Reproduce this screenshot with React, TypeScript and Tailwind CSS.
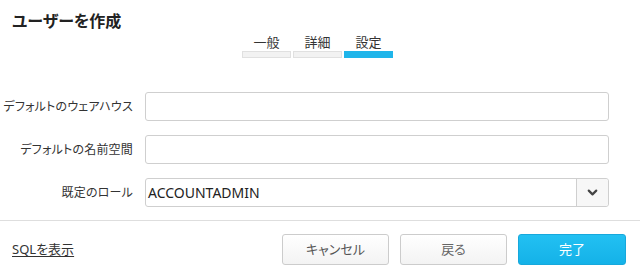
import { ChevronDown } from 'lucide-react'

const font = { fontFamily: '"Noto Sans", "Noto Sans CJK JP", sans-serif' }

const steps = [
  { label: '一般', active: false },
  { label: '詳細', active: false },
  { label: '設定', active: true },
]

function Field({ label, children }: { label: string; children: React.ReactNode }) {
  return (
    <div className="flex items-center h-[29px]">
      <div className="w-[133px] text-right text-[12px] tracking-[0.2px] text-[#333] whitespace-nowrap">
        {label}
      </div>
      <div className="ml-[12px] w-[464px] h-[29px]">{children}</div>
    </div>
  )
}

export default function App() {
  return (
    <div
      className="w-[640px] h-[280px] bg-white flex flex-col [font-family:'Noto_Sans','Noto_Sans_CJK_JP',sans-serif] [font-feature-settings:'palt']"
    >
      <h1 className="pt-[8px] px-[12px] text-[16px] font-bold leading-[26px] text-[#222]">
        ユーザーを作成
      </h1>

      {/* Step indicator */}
      <div className="flex ml-[242px] gap-[2px]">
        {steps.map((s) => (
          <div key={s.label} className="w-[49px] flex flex-col items-center">
            <span className="text-[13px] leading-[17px] text-[#333]">{s.label}</span>
            <div
              className={
                s.active
                  ? 'w-full h-[7px] bg-[#1fb5ea]'
                  : 'w-full h-[7px] bg-[#f2f2f2] border border-[#e0e0e0]'
              }
            />
          </div>
        ))}
      </div>

      <div className="mt-[34px] flex flex-col gap-[14px]">
        <Field label="デフォルトのウェアハウス">
          <div className="h-full border border-[#cfcfcf] rounded-[3px]" />
        </Field>
        <Field label="デフォルトの名前空間">
          <div className="h-full border border-[#cfcfcf] rounded-[3px]" />
        </Field>
        <Field label="既定のロール">
          <div className="h-full border border-[#cfcfcf] rounded-[3px] flex items-center">
            <span className="flex-1 pl-[2px] text-[14px] text-[#222]" style={font}>
              ACCOUNTADMIN
            </span>
            <div className="w-[32px] h-full border-l border-[#cfcfcf] bg-[#f7f7f7] rounded-r-[3px] flex items-center justify-center">
              <ChevronDown size={15} strokeWidth={3.5} className="text-[#444]" />
            </div>
          </div>
        </Field>
      </div>

      <div className="mt-[13px] border-t border-[#dedede]" />

      <div className="flex-1 flex items-center pl-[12px] pr-[14px] pb-[2px]">
        <a className="text-[13px] text-[#333] underline underline-offset-2">SQLを表示</a>
        <div className="ml-auto flex gap-[11px]">
          <button className="w-[107px] h-[31px] rounded-[3px] border border-[#cccccc] bg-gradient-to-b from-white to-[#f3f3f3] text-[13px] text-[#555]">
            キャンセル
          </button>
          <button className="w-[107px] h-[31px] rounded-[3px] border border-[#cccccc] bg-gradient-to-b from-white to-[#f3f3f3] text-[13px] text-[#666]">
            戻る
          </button>
          <button className="w-[108px] h-[31px] rounded-[3px] border border-[#17a8dc] bg-gradient-to-b from-[#22c0f2] to-[#14b2e8] text-[13px] text-white">
            完了
          </button>
        </div>
      </div>
    </div>
  )
}
